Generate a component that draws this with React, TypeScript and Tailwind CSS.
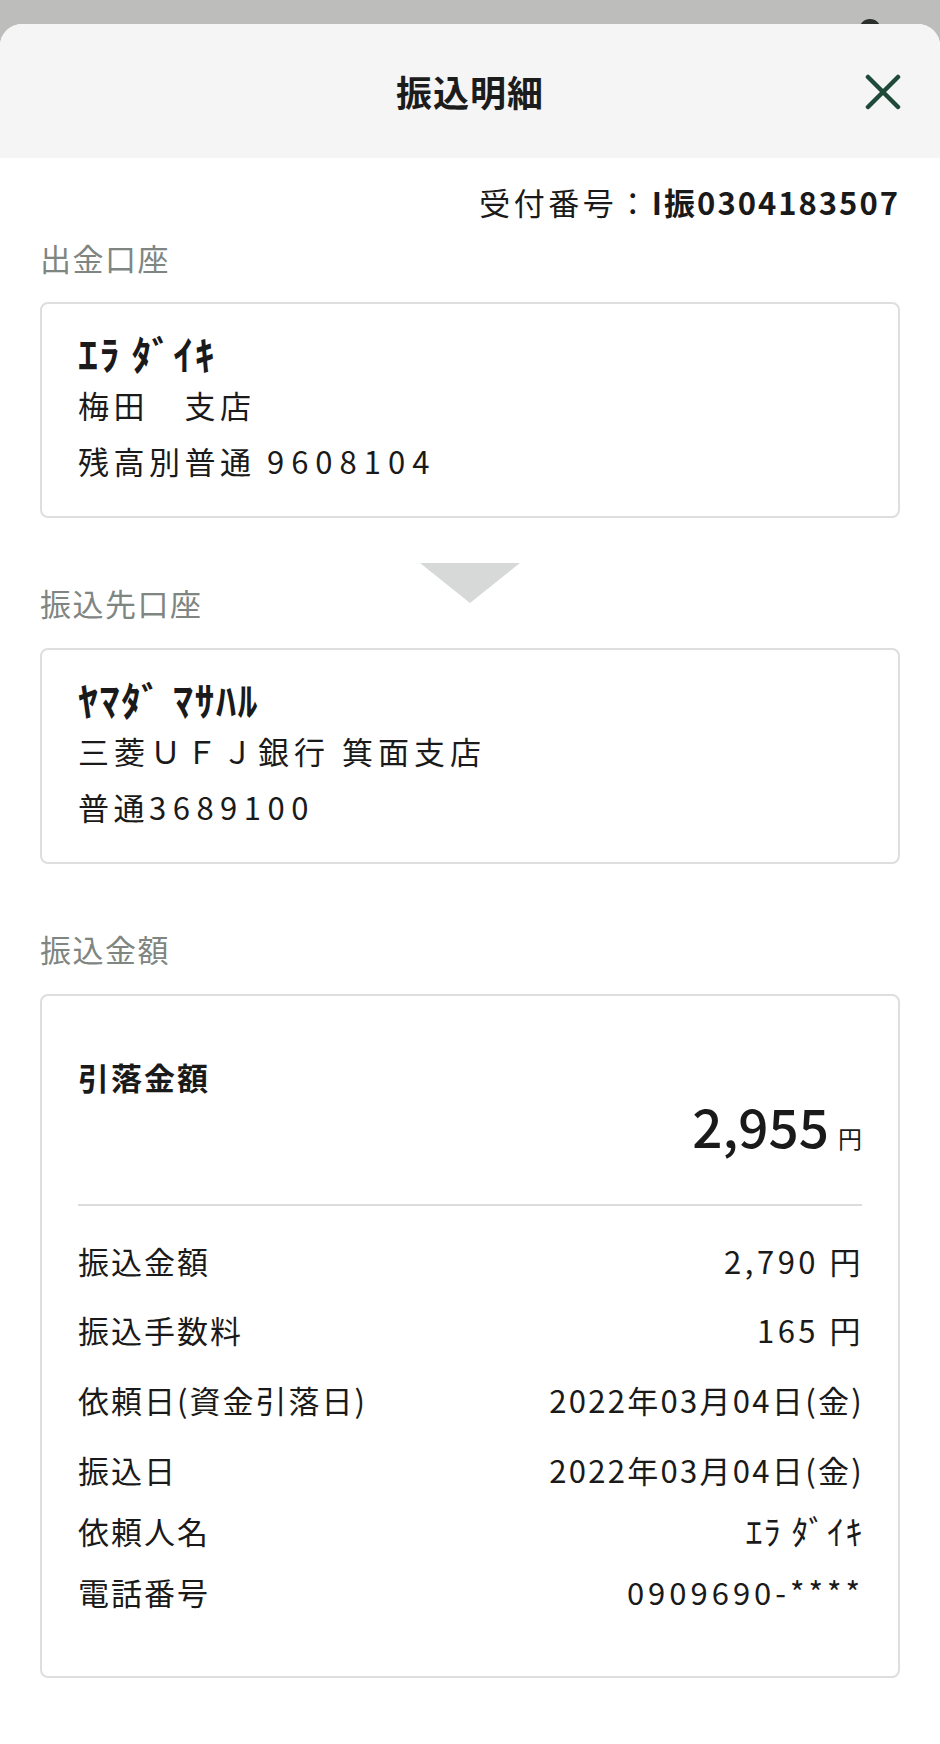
import React from "react";

const FONT = "font-['Noto_Sans_CJK_JP','Noto_Sans',sans-serif]";

const rows: { label: string; value: string; mt: string; vcls: string }[] = [
  { label: "振込金額", value: "2,790 円", mt: "mt-[35px]", vcls: "tracking-[3.5px]" },
  { label: "振込手数料", value: "165 円", mt: "mt-[29px]", vcls: "tracking-[3.5px]" },
  { label: "依頼日(資金引落日)", value: "2022年03月04日(金)", mt: "mt-[30px]", vcls: "tracking-[2.3px]" },
  { label: "振込日", value: "2022年03月04日(金)", mt: "mt-[30px]", vcls: "tracking-[2.3px]" },
  { label: "依頼人名", value: "ｴﾗ ﾀﾞｲｷ", mt: "mt-[21px]", vcls: "tracking-[1.5px] text-[34px]" },
  { label: "電話番号", value: "0909690-****", mt: "mt-[21px]", vcls: "tracking-[4px]" },
];

function SectionLabel({ children }: { children: React.ReactNode }) {
  return (
    <div className="h-[40px] leading-[40px] text-[31px] tracking-[1.5px] text-[#7f8682]">
      {children}
    </div>
  );
}

function AccountCard({
  name,
  line1,
  line2,
}: {
  name: string;
  line1: React.ReactNode;
  line2: React.ReactNode;
}) {
  return (
    <div className="h-[216px] rounded-[8px] border-2 border-[#dedede] bg-white px-[36px] pt-[25px]">
      <div className="h-[48px] leading-[48px] text-[40px] font-bold tracking-[1.5px] text-[#1a1a1a]">{name}</div>
      <div className="h-[56px] leading-[56px] text-[31px] tracking-[4.5px] text-[#1a1a1a]">{line1}</div>
      <div className="h-[56px] leading-[56px] text-[31px] tracking-[4.5px] text-[#1a1a1a]">{line2}</div>
    </div>
  );
}

export default function App() {
  return (
    <div className={`${FONT} min-h-[1744px] w-[940px] bg-[#bdbebb] pt-[24px] relative`}>
      <div className="absolute left-[859px] top-[19px] h-[22px] w-[22px] rounded-full bg-[#2a2f2c]" />
      <div className="relative min-h-[1720px] rounded-t-[22px] bg-white overflow-hidden">
        {/* header */}
        <div className="relative flex h-[134px] items-center justify-center bg-[#f5f5f5]">
          <div className="text-[36px] font-bold leading-[44px] tracking-[1px] text-[#1c1c1c]">振込明細</div>
          <svg
            className="absolute right-[39px] top-[50px]"
            width="36"
            height="36"
            viewBox="0 0 36 36"
            fill="none"
          >
            <path d="M3 3 L33 33 M33 3 L3 33" stroke="#1f4a3a" strokeWidth="4.5" strokeLinecap="round" />
          </svg>
        </div>

        {/* body */}
        <div className="px-[40px]">
          <div className="mt-[24px] h-[40px] text-right leading-[40px] text-[31px] text-[#1a1a1a]">
            <span className="tracking-[3.5px]">受付番号：</span>
            <span className="font-bold tracking-[2px]">I振0304183507</span>
          </div>

          <div className="mt-[16px]">
            <SectionLabel>出金口座</SectionLabel>
          </div>

          <div className="mt-[24px]">
            <AccountCard
              name="ｴﾗ ﾀﾞｲｷ"
              line1="梅田　支店"
              line2={
                <>
                  残高別普通 <span className="tracking-[7px]">9608104</span>
                </>
              }
            />
          </div>

          <div className="flex h-[130px] flex-col">
            <svg className="mt-[45px] self-center" width="100" height="40" viewBox="0 0 100 40">
              <polygon points="0,0 100,0 50,40" fill="#d6d9d8" />
            </svg>
            <div className="mt-[-20px]">
              <SectionLabel>振込先口座</SectionLabel>
            </div>
          </div>

          <AccountCard
            name="ﾔﾏﾀﾞ ﾏｻﾊﾙ"
            line1={<span className="tracking-[5px]">三菱ＵＦＪ銀行 箕面支店</span>}
            line2={
              <>
                普通<span className="tracking-[6.5px]">3689100</span>
              </>
            }
          />

          <div className="mt-[65px]">
            <SectionLabel>振込金額</SectionLabel>
          </div>

          <div className="mt-[25px] rounded-[8px] border-2 border-[#dedede] bg-white px-[36px] pt-[61px] pb-[64px]">
            <div className="h-[40px] leading-[40px] text-[31px] font-bold tracking-[2px] text-[#1a1a1a]">引落金額</div>
            <div className="mt-[-2px] flex h-[60px] items-baseline justify-end leading-[60px] text-[#1a1a1a]">
              <span className="text-[53px] font-medium">2,955</span>
              <span className="ml-[9px] text-[24px]">円</span>
            </div>
            <div className="mt-[49px] h-[2px] bg-[#dcdcdc]" />
            {rows.map((r) => (
              <div
                key={r.label}
                className={`${r.mt} flex h-[40px] items-center justify-between leading-[40px] text-[31px] text-[#1a1a1a]`}
              >
                <span className="tracking-[2px]">{r.label}</span>
                <span className={`${r.vcls} mr-[-2px]`}>{r.value}</span>
              </div>
            ))}
          </div>
        </div>
      </div>
    </div>
  );
}
